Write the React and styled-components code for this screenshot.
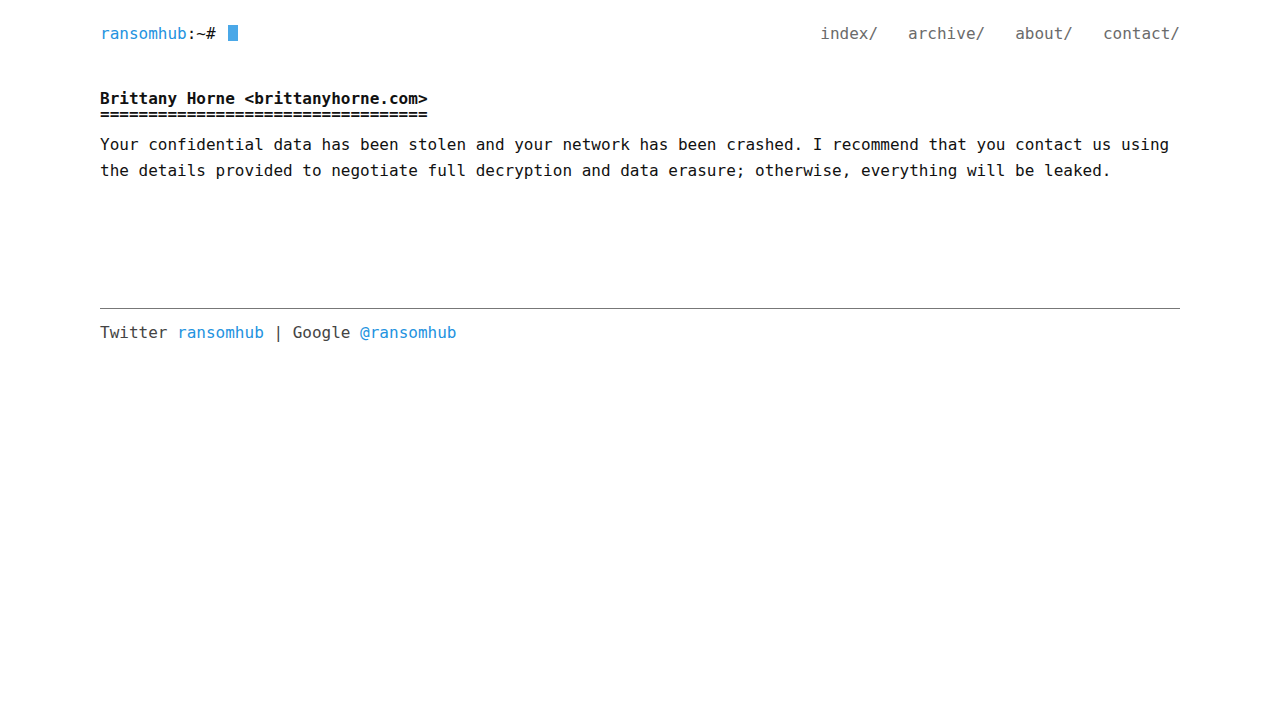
import React from "react";
import styled, { createGlobalStyle } from "styled-components";

const GlobalStyle = createGlobalStyle`
  html, body {
    margin: 0;
    padding: 0;
    background: #fff;
  }
  body {
    font-family: "DejaVu Sans Mono", "Liberation Mono", monospace;
    font-size: 16px;
    color: #111;
  }
`;

const Page = styled.div`
  width: 1080px;
  margin: 0 auto;
  padding-top: 22px;
`;

const Header = styled.header`
  display: flex;
  justify-content: space-between;
  align-items: center;
  height: 22px;
`;

const Logo = styled.div`
  display: flex;
  align-items: center;
  color: #111;
  white-space: pre;
`;

const Link = styled.a`
  color: #2493e0;
  text-decoration: none;
`;

const Cursor = styled.span`
  display: inline-block;
  width: 10px;
  height: 16px;
  margin-left: 3px;
  background: #4aa8e8;
`;

const Nav = styled.nav`
  display: flex;
  gap: 30px;
`;

const NavLink = styled.a`
  color: #6b6b6b;
  text-decoration: none;
`;

const Post = styled.article`
  padding-top: 47px;
  min-height: 217px;
`;

const Title = styled.h1`
  margin: 0;
  font-size: 16px;
  font-weight: bold;
  line-height: 15px;
  color: #111;
  white-space: pre;
`;

const Body = styled.p`
  margin: 11px 0 0;
  line-height: 26px;
  color: #111;
`;

const Footer = styled.footer`
  border-top: 1px solid #777;
  padding-top: 14px;
  color: #444;
`;

const title = "Brittany Horne <brittanyhorne.com>";

export default function App() {
  return (
    <>
      <GlobalStyle />
      <Page>
        <Header>
          <Logo>
            <Link href="#">ransomhub</Link>:~# <Cursor />
          </Logo>
          <Nav>
            <NavLink href="#">index/</NavLink>
            <NavLink href="#">archive/</NavLink>
            <NavLink href="#">about/</NavLink>
            <NavLink href="#">contact/</NavLink>
          </Nav>
        </Header>
        <Post>
          <Title>
            {title}
            {"\n"}
            {"=".repeat(title.length)}
          </Title>
          <Body>
            Your confidential data has been stolen and your network has been crashed. I recommend that you contact us using the details provided to negotiate full decryption and data erasure; otherwise, everything will be leaked.
          </Body>
        </Post>
        <Footer>
          Twitter <Link href="#">ransomhub</Link> | Google <Link href="#">@ransomhub</Link>
        </Footer>
      </Page>
    </>
  );
}
